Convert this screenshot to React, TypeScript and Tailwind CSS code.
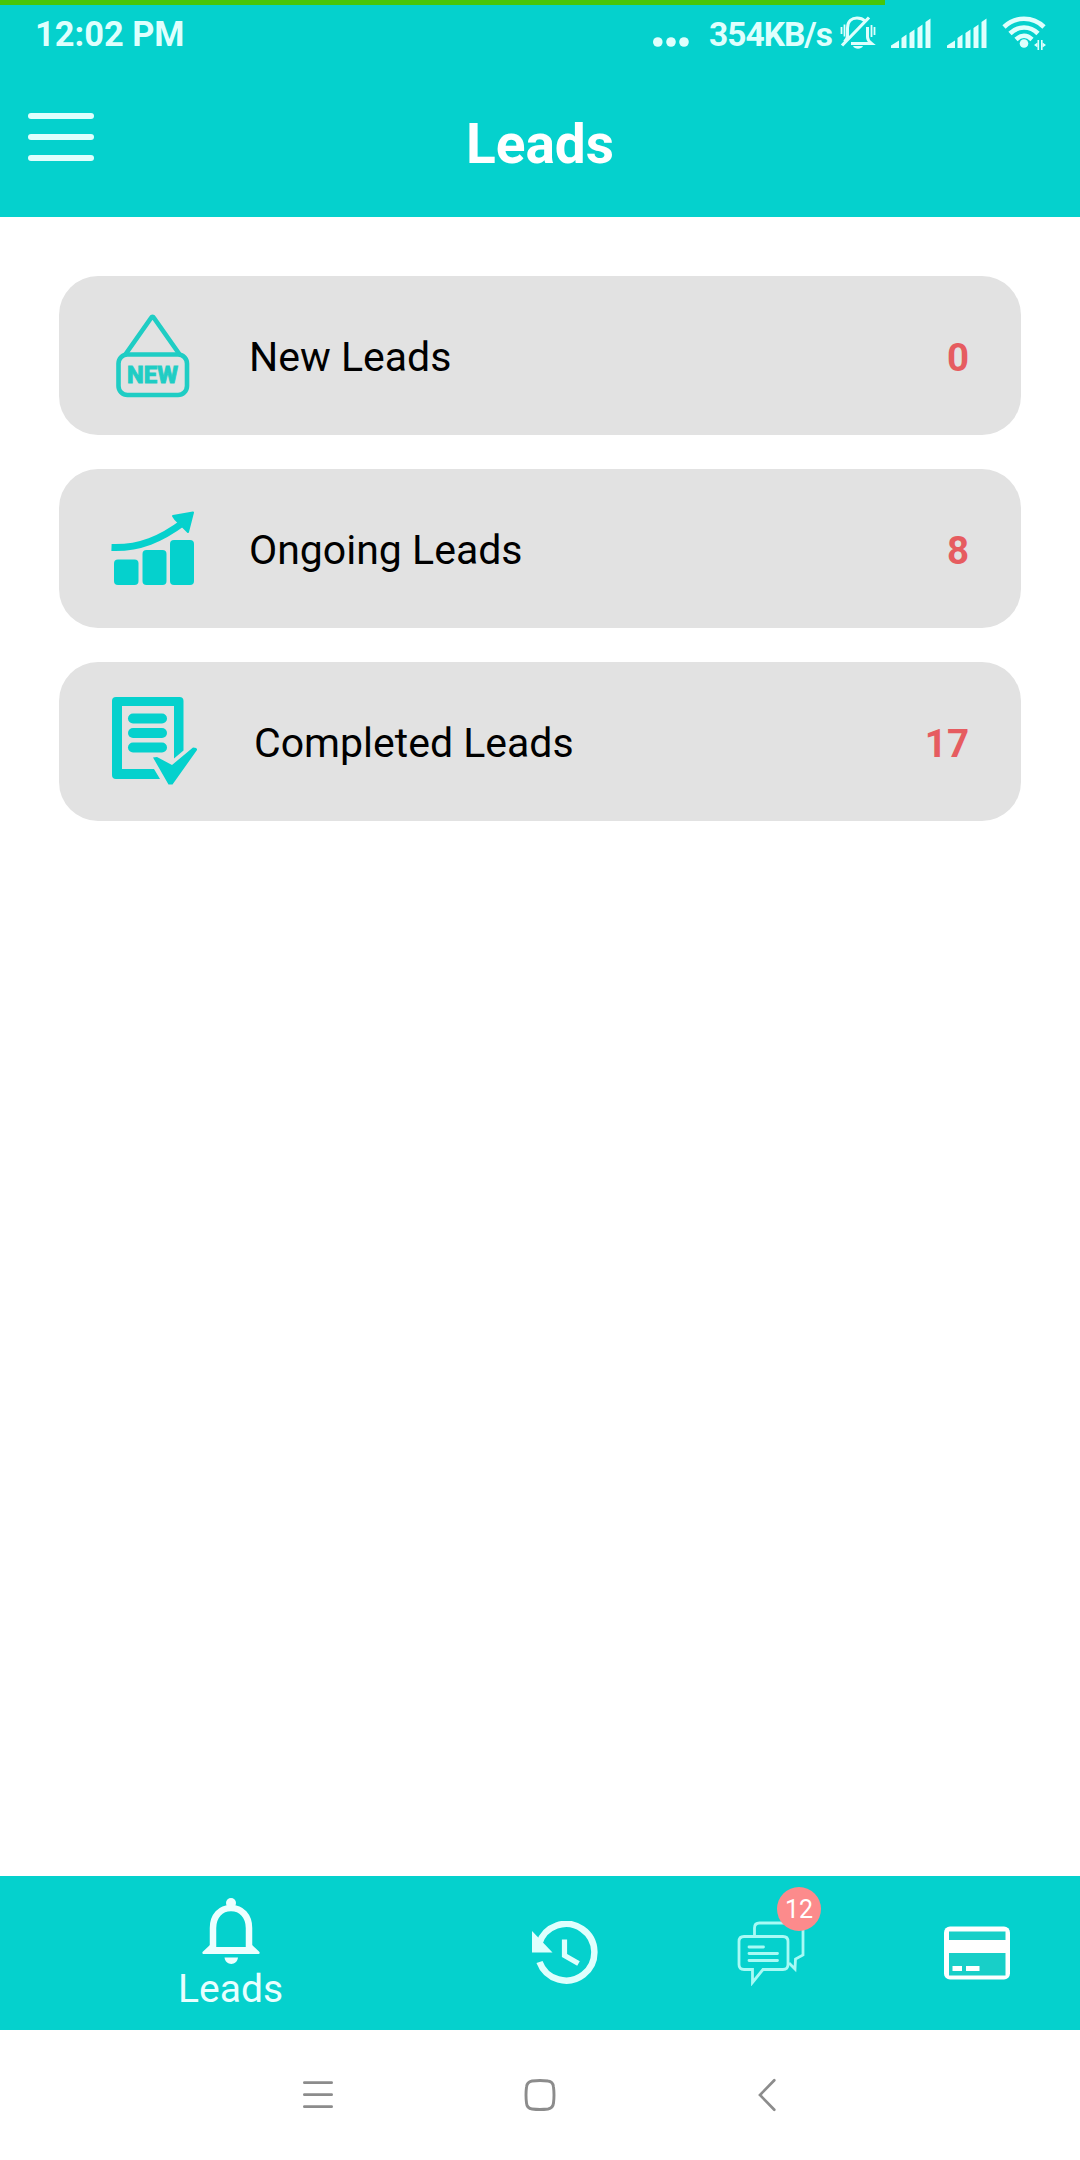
import type { ReactNode } from "react";

const TEAL = "#05d1cd";

function SignalIcon() {
  return (
    <svg width="42" height="32" viewBox="0 0 42 32" fill="#dffffd">
      <path d="M1 31v-2.500l8-5v7.500zM11.500 21l5-3.500v13.500h-5zM19.500 16l5-3.500v18.500h-5zM27.500 11l5-3.500v23.500h-5zM35.500 5l5-3.500V31h-5z" />
    </svg>
  );
}

function MutedBellIcon() {
  return (
    <svg width="36" height="34" viewBox="0 0 36 34" fill="none" stroke="#dffffd" strokeWidth="3">
      <path d="M7.500 22V12C7.500 5 12 2 17 2c3.500 0 6 1 8 3M27.500 11v10c0 3 1.500 4.500 4 6.500H11" />
      <path d="M7.500 20c0 2-1 4-3 6M2 29.500 29 1.500" strokeWidth="3.200" />
      <path d="M1.500 11v7M4.500 8.500v12M31.500 9v12M34.500 11v8" strokeWidth="1.800" />
      <path d="M13 30h10c-1.500 3.500-8.500 3.500-10 0z" fill="#dffffd" stroke="none" />
    </svg>
  );
}

function WifiIcon() {
  return (
    <svg width="46" height="36" viewBox="0 0 46 36" fill="none" stroke="#dffffd" strokeWidth="4.600">
      <path d="M2 12C13 1 31 1 42 12M8 18.500c8-8 20-8 28 0M14 24.500c5-4.800 11-4.800 16 0" />
      <circle cx="22" cy="28.500" r="4.300" fill="#dffffd" stroke="none" />
      <path d="M36.300 25v10M39.800 25v10" strokeWidth="1.600" />
      <path d="M35.500 27.500v5l-3.500-2.500zM40.500 27.500v5l3.500-2.500z" fill="#dffffd" stroke="none" />
    </svg>
  );
}

function NewIcon() {
  return (
    <svg width="90" height="159" viewBox="110 276 90 159" fill="none" stroke="#1fcdc4" strokeWidth="4.600">
      <path d="M125 355l26-37q1.500-2.500 3 0L180 355" />
      <rect x="118.500" y="354.500" width="68.500" height="40.500" rx="9" />
      <text
        x="127"
        y="382.500"
        textLength="51"
        lengthAdjust="spacingAndGlyphs"
        fill="#1fcdc4"
        strokeWidth="0.800"
        fontSize="23"
        fontWeight="800"
        fontFamily="Roboto, sans-serif"
      >
        NEW
      </text>
    </svg>
  );
}

function GrowthIcon() {
  return (
    <svg width="90" height="159" viewBox="110 469 90 159" fill={TEAL}>
      <rect x="114" y="559.500" width="24.500" height="25.500" rx="4" />
      <rect x="142.500" y="550" width="24" height="35" rx="4" />
      <rect x="170" y="540" width="24" height="45" rx="4" />
      <path d="M111.500 547.500C140 548.500 161 539 184 522" fill="none" stroke={TEAL} strokeWidth="7" />
      <path d="M193 512.500l-5 19.500-5-5-8-8-2-3z" stroke={TEAL} strokeWidth="2" strokeLinejoin="round" />
    </svg>
  );
}

function CompletedIcon() {
  return (
    <svg width="90" height="159" viewBox="110.500 662 90 159" fill={TEAL}>
      <path d="M116.500 697H180q4 0 4 4v49.500l-9.500 8V706H122.500v63h32l6 10h-44q-4 0-4-4v-74q0-4 4-4z" />
      <rect x="128.500" y="713.500" width="39" height="10" rx="5" />
      <rect x="128.500" y="728" width="39" height="10" rx="5" />
      <rect x="128.500" y="742.500" width="39" height="10" rx="5" />
      <path d="M153.500 757.500l4-.5 15 8 21-17.500q4.500 0 4 2.500L173 784.500h-4z" />
    </svg>
  );
}

interface LeadRowProps {
  icon: ReactNode;
  label: string;
  count: number;
  wide?: boolean;
}

function LeadRow({ icon, label, count, wide = false }: LeadRowProps) {
  return (
    <li className="flex h-[159px] items-center rounded-[39px] bg-[#e2e2e2] pr-[52px] pl-[51px]">
      {icon}
      <span className={`flex-1 pt-[4px] text-[41px] leading-none text-black ${wide ? "pl-[54px]" : "pl-[49px]"}`}>{label}</span>
      <span className="pt-[5px] text-[38.500px] leading-none font-bold text-[#e65c60]">{count}</span>
    </li>
  );
}

function StatusBar() {
  return (
    <div className="flex h-[66px] items-center justify-between pr-[32px] pl-[35px] text-[34px] leading-none font-bold text-[#dffffd]">
      <span className="pt-[3px] text-[34.400px]">12:02 PM</span>
      <div className="flex items-center">
        <svg className="mr-[20px]" width="36" height="36" viewBox="0 0 36 36" fill="#dffffd">
          <circle cx="4.800" cy="27" r="4.800" />
          <circle cx="18" cy="27" r="4.800" />
          <circle cx="31" cy="27" r="4.800" />
        </svg>
        <span className="mr-[8px] pt-[3px] text-[33.500px] tracking-[-1px]">354KB/s</span>
        <MutedBellIcon />
        <div className="mr-[14px] ml-[14px] flex gap-[14px]">
          <SignalIcon />
          <SignalIcon />
        </div>
        <WifiIcon />
      </div>
    </div>
  );
}

function BellIcon() {
  return (
    <svg width="60" height="68" viewBox="201 1897 60 68" fill="#ecffff">
      <circle cx="231" cy="1903" r="5" />
      <path d="M213 1949v-21c0-12 7.500-20 18-20s18 8 18 20v21" fill="none" stroke="#ecffff" strokeWidth="6.500" />
      <path d="M211 1944l-8.500 8q-.5 2 1 2h55q1.500 0 1-2l-8.500-8q-1-1-2 3H213q-1-4-2-3z" />
      <path d="M224.500 1957.500h13.500c-1 8.500-12.500 8.500-13.500 0z" />
    </svg>
  );
}

function HistoryIcon() {
  return (
    <svg width="68" height="66" viewBox="531 1920 68 66" fill="none" stroke="#dffffd">
      <path d="M539 1943A28.300 28.300 0 1 1 539.500 1961" strokeWidth="6.500" />
      <path d="M532 1930v21.500h20.500z" fill="#dffffd" stroke="none" />
      <path d="M564.500 1938.500v16l14 8" strokeWidth="5.200" />
    </svg>
  );
}

function ChatIcon() {
  return (
    <svg width="68" height="66" viewBox="737 1920 68 66" fill="none" stroke="#a8faf5" strokeWidth="2.800">
      <path d="M754.500 1935v-7q0-5 5-5h39q4.500 0 4.500 5v27l-7.500 4-.5 10-6-6" />
      <path d="M744 1936.500h39q5 0 5 5v23q0 5-5 5h-20l-10.500 13v-13H744q-5 0-5-5v-23q0-5 5-5z" />
      <path d="M749 1947h14.500M749 1953.500h28.500M749 1960.500h28.500" strokeLinecap="round" />
    </svg>
  );
}

function CardIcon() {
  return (
    <svg width="66" height="54" viewBox="944 1926 66 54">
      <rect x="944" y="1926.500" width="66" height="53" rx="6" fill="#fff" />
      <path d="M949 1931.500h56.500v8.500H949zM949 1953h56.500v22.500H949z" fill="#18cfc8" />
      <path d="M952.500 1966h9.500v5h-9.500zM966 1966h13.500v5H966z" fill="#fff" />
    </svg>
  );
}

function TabBar() {
  return (
    <nav className="flex h-[154px] items-center bg-[#05d1cd]">
      <div className="flex w-[461px] flex-col items-center gap-[5px] pb-[1px] text-[39px] leading-none text-[#e8ffff]">
        <BellIcon />
        <span>Leads</span>
      </div>
      <div className="ml-[70px] pt-[2px]">
        <HistoryIcon />
      </div>
      <div className="relative ml-[138px] pb-[1px]">
        <ChatIcon />
        <span className="absolute -top-[33px] left-[40px] flex size-[44px] items-center justify-center rounded-full bg-[#fc8b8c] pt-[2px] text-[25px] leading-none text-white">
          12
        </span>
      </div>
      <div className="ml-[139px]">
        <CardIcon />
      </div>
    </nav>
  );
}

function SystemNav() {
  return (
    <div className="flex h-[130px] items-center pl-[303px]">
      <svg width="30" height="34" viewBox="0 0 30 34" stroke="#8c8c8c" strokeWidth="2.800" strokeLinecap="round">
        <path d="M1.400 4.700h27.200M1.400 16.700h27.200M1.400 28.700h27.200" />
      </svg>
      <svg className="ml-[191px]" width="32" height="32" viewBox="0 0 32 32" fill="none" stroke="#8c8c8c" strokeWidth="2.900">
        <path d="M8 2q8-1 16 0 5 .5 5.500 6 1 8 0 16-.5 5-5.500 6-8 1-16 0-5-.5-5.500-6-1-8 0-16 .5-5 5.500-6z" />
      </svg>
      <svg className="ml-[202px]" width="18" height="34" viewBox="0 0 18 34" fill="none" stroke="#8c8c8c" strokeWidth="2.700" strokeLinecap="round">
        <path d="M16.300 2.200 2 17l14.300 14.800" />
      </svg>
    </div>
  );
}

export default function App() {
  return (
    <div className="flex h-[2160px] w-[1080px] flex-col overflow-hidden bg-white font-[Roboto,sans-serif]">
      <header className="relative h-[217px] shrink-0 bg-[#05d1cd]">
        <div className="absolute top-0 left-0 h-[5px] w-[885px] bg-[#47c608]" />
        <StatusBar />
        <div className="grid h-[151px] grid-cols-[1fr_auto_1fr] items-center px-[28px]">
          <div className="mb-[9px] flex w-[66px] flex-col gap-[15px]">
            <span className="h-[6px] rounded-full bg-[#dffffd]" />
            <span className="h-[6px] rounded-full bg-[#dffffd]" />
            <span className="h-[6px] rounded-full bg-[#dffffd]" />
          </div>
          <h1 className="pt-[5px] text-[55px] leading-none font-bold text-white">Leads</h1>
        </div>
      </header>
      <main className="flex-1 px-[59px] pt-[59px]">
        <ul className="flex flex-col gap-[34px]">
          <LeadRow icon={<NewIcon />} label="New Leads" count={0} />
          <LeadRow icon={<GrowthIcon />} label="Ongoing Leads" count={8} />
          <LeadRow icon={<CompletedIcon />} label="Completed Leads" count={17} wide />
        </ul>
      </main>
      <TabBar />
      <SystemNav />
    </div>
  );
}
